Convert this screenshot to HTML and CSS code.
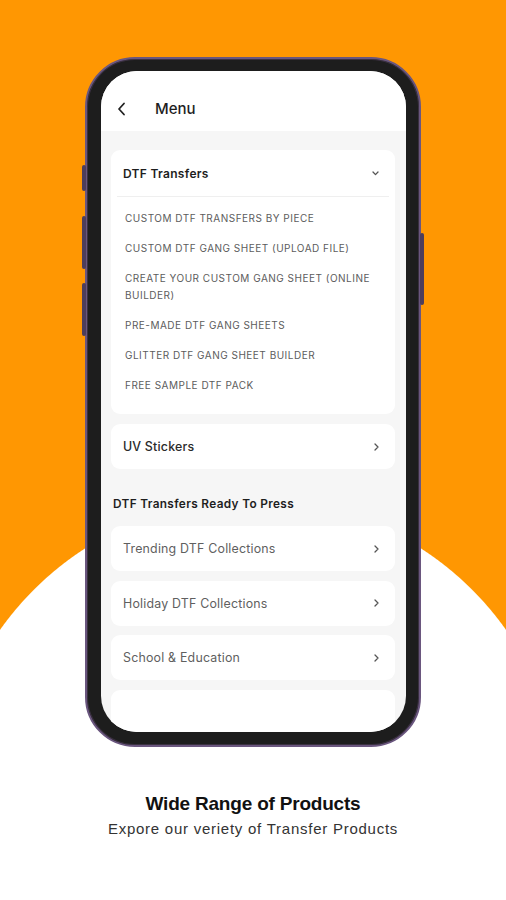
FILE: index.html
```html
<!DOCTYPE html>
<html lang="en">
<head>
<meta charset="utf-8">
<title>Menu</title>
<link rel="stylesheet" href="styles.css">
</head>
<body>
<div class="page">
  <div class="phone">
    <span class="btn btn-l1"></span>
    <span class="btn btn-l2"></span>
    <span class="btn btn-l3"></span>
    <span class="btn btn-r1"></span>
    <div class="screen">
      <header class="topbar">
        <svg class="back" width="10" height="14" viewBox="0 0 10 14"><polyline points="7,1.5 2,7 7,12.5" fill="none" stroke="#222" stroke-width="1.8" stroke-linecap="round" stroke-linejoin="round"/></svg>
        <span class="title">Menu</span>
      </header>
      <main class="content">
        <section class="card acc">
          <div class="acc-head">
            <span>DTF Transfers</span>
            <svg class="chev" width="7" height="5" viewBox="0 0 7 5"><polyline points="1,1 3.5,3.6 6,1" fill="none" stroke="#555" stroke-width="1.3" stroke-linecap="round" stroke-linejoin="round"/></svg>
          </div>
          <ul class="sub">
            <li>CUSTOM DTF TRANSFERS BY PIECE</li>
            <li>CUSTOM DTF GANG SHEET (UPLOAD FILE)</li>
            <li>CREATE YOUR CUSTOM GANG SHEET (ONLINE BUILDER)</li>
            <li>PRE-MADE DTF GANG SHEETS</li>
            <li>GLITTER DTF GANG SHEET BUILDER</li>
            <li>FREE SAMPLE DTF PACK</li>
          </ul>
        </section>
        <div class="card row dark"><span>UV Stickers</span><svg class="chev" width="5" height="8" viewBox="0 0 5 8"><polyline points="1,1 4,4 1,7" fill="none" stroke="#555" stroke-width="1.3" stroke-linecap="round" stroke-linejoin="round"/></svg></div>
        <h3 class="sec">DTF Transfers Ready To Press</h3>
        <div class="rows">
          <div class="card row"><span>Trending DTF Collections</span><svg class="chev" width="5" height="8" viewBox="0 0 5 8"><polyline points="1,1 4,4 1,7" fill="none" stroke="#555" stroke-width="1.3" stroke-linecap="round" stroke-linejoin="round"/></svg></div>
          <div class="card row"><span>Holiday DTF Collections</span><svg class="chev" width="5" height="8" viewBox="0 0 5 8"><polyline points="1,1 4,4 1,7" fill="none" stroke="#555" stroke-width="1.3" stroke-linecap="round" stroke-linejoin="round"/></svg></div>
          <div class="card row"><span>School &amp; Education</span><svg class="chev" width="5" height="8" viewBox="0 0 5 8"><polyline points="1,1 4,4 1,7" fill="none" stroke="#555" stroke-width="1.3" stroke-linecap="round" stroke-linejoin="round"/></svg></div>
          <div class="card row"><span></span></div>
        </div>
      </main>
    </div>
  </div>
  <div class="caption">
    <h2>Wide Range of Products</h2>
    <p>Expore our veriety of Transfer Products</p>
  </div>
</div>
</body>
</html>
```
FILE: styles.css
```css
html, body {
  margin: 0;
  padding: 0;
}
body {
  width: 506px;
  height: 900px;
  overflow: hidden;
  background: radial-gradient(circle 310px at 253px 809px, #ffffff 309.5px, #ff9702 310.5px);
  font-family: Inter, "Noto Sans", sans-serif;
}
.page {
  display: flex;
  flex-direction: column;
  align-items: center;
  padding-top: 57px;
}
.phone {
  position: relative;
  width: 305px;
  height: 661px;
  padding: 12px 13px 13px 14px;
  border: 2px solid #6a567e;
  border-radius: 50px;
  background: #1d1d1d;
  box-shadow: inset 0 0 0 1px #3a3040;
}
.btn {
  position: absolute;
  width: 4px;
  background: #4d3e5c;
  border-radius: 2px;
}
.btn-l1 { left: -5px; top: 106px; height: 26px; }
.btn-l2 { left: -5px; top: 157px; height: 53px; }
.btn-l3 { left: -5px; top: 224px; height: 53px; }
.btn-r1 { right: -5px; top: 174px; height: 72px; }
.screen {
  width: 305px;
  height: 661px;
  border-radius: 36px;
  overflow: hidden;
  background: #f6f6f6;
  display: flex;
  flex-direction: column;
}
.topbar {
  flex: 0 0 auto;
  height: 60px;
  background: #ffffff;
  display: flex;
  align-items: center;
  padding: 16px 0 0 16px;
  box-sizing: border-box;
}
.back {
  display: block;
}
.title {
  margin-left: 28px;
  font-size: 15px;
  font-weight: 500;
  color: #1e1e1e;
  line-height: 20px;
}
.content {
  padding: 19px 11px 0 10px;
  display: flex;
  flex-direction: column;
}
.card {
  background: #ffffff;
  border-radius: 9px;
}
.acc {
  margin-bottom: 10px;
  padding-bottom: 14px;
}
.acc-head {
  height: 46px;
  display: flex;
  align-items: center;
  justify-content: space-between;
  padding: 0 10px 0 6px;
  margin: 0 6px;
  font-size: 12px;
  font-weight: 600;
  letter-spacing: 0.3px;
  color: #1e1e1e;
  border-bottom: 1.5px solid #efefef;
}
.sub {
  list-style: none;
  margin: 0;
  padding: 6px 16px 0 14px;
}
.sub li {
  font-size: 10px;
  line-height: 17px;
  padding: 6.5px 0;
  color: #5c5c5c;
  letter-spacing: 0.5px;
}
.row {
  height: 45px;
  box-sizing: border-box;
  display: flex;
  align-items: center;
  justify-content: space-between;
  padding: 0 16px 0 12px;
  font-size: 12.4px;
  letter-spacing: 0.2px;
  color: #5f5f5f;
}
.row.dark {
  color: #2a2a2a;
  font-weight: 500;
}
.sec {
  margin: 27px 0 14px 2px;
  font-size: 11.8px;
  line-height: 16px;
  font-weight: 600;
  letter-spacing: 0.35px;
  color: #1e1e1e;
}
.rows {
  display: flex;
  flex-direction: column;
  gap: 9.5px;
}
.caption {
  margin-top: 45px;
  text-align: center;
}
.caption h2 {
  margin: 0;
  font-family: "Liberation Sans", Arial, sans-serif;
  font-size: 19px;
  line-height: 24px;
  font-weight: 700;
  letter-spacing: -0.2px;
  color: #111111;
}
.caption p {
  margin: 4px 0 0;
  font-family: "Liberation Sans", Arial, sans-serif;
  font-size: 15px;
  line-height: 18px;
  letter-spacing: 0.75px;
  color: #333333;
}
```
